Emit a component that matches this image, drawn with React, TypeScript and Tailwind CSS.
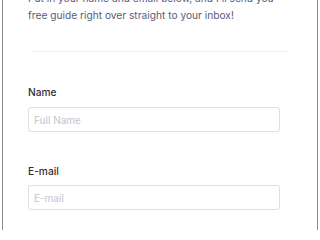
import React from "react";

export default function App() {
    return (
        <div className="h-[240px] w-[320px] overflow-hidden bg-white" style={{ fontFamily: "Inter, 'Noto Sans', sans-serif" }}>
            <div className="mx-[2px] h-full border-x border-[#8f8f8f] pl-[25px] pr-[37px]">
                <p className="-mt-[10px] text-[10.2px] leading-[17px] text-[#5b5a78]">
                    Put in your name and email below, and I'll send you free guide right over straight to your inbox!
                </p>

                <div className="mt-[27px] ml-[4px] -mr-[8px] h-px bg-[#f1f1f3]" />

                <form className="mt-[33px] flex flex-col">
                    <label className="text-[10.2px] font-medium leading-[14px] text-[#2e2d3a]">Name</label>
                    <input
                        type="text"
                        placeholder="Full Name"
                        className="mt-[8px] h-[25px] w-full rounded-[3px] border border-[#dedde3] px-[5px] text-[10px] text-[#2e2d3a] outline-none placeholder:text-[#c4c3cf]"
                    />

                    <label className="mt-[32px] text-[10.2px] font-medium leading-[14px] text-[#2e2d3a]">E-mail</label>
                    <input
                        type="email"
                        placeholder="E-mail"
                        className="mt-[7px] h-[25px] w-full rounded-[3px] border border-[#dedde3] px-[5px] text-[10px] text-[#2e2d3a] outline-none placeholder:text-[#c4c3cf]"
                    />
                </form>
            </div>
        </div>
    );
}
